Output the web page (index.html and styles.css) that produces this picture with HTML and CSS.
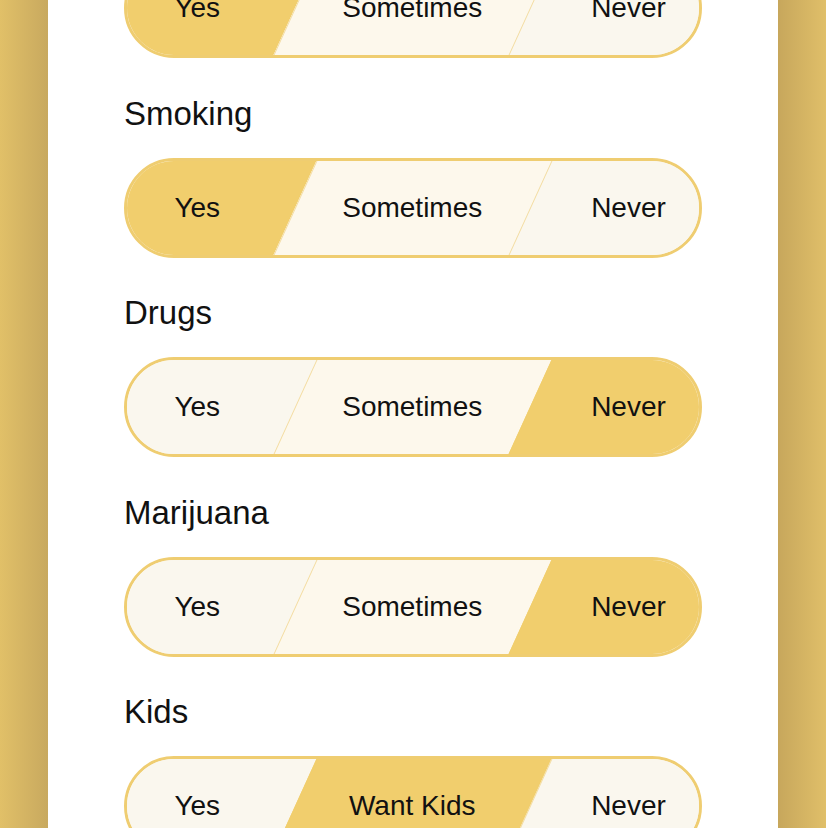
FILE: index.html
```html
<!DOCTYPE html>
<html lang="en">
<head>
<meta charset="utf-8">
<title>Preferences</title>
<link rel="stylesheet" href="styles.css">
</head>
<body>
<div class="page">
  <aside class="band band-left"></aside>
  <main class="card">
    <div class="list">
      <section class="group">
        <h2 class="label">Drinking</h2>
        <div class="seg">
          <div class="opt opt-first sel"><span>Yes</span></div>
          <div class="opt opt-mid"><span>Sometimes</span></div>
          <div class="opt opt-last"><span>Never</span></div>
        </div>
      </section>
      <section class="group">
        <h2 class="label">Smoking</h2>
        <div class="seg">
          <div class="opt opt-first sel"><span>Yes</span></div>
          <div class="opt opt-mid"><span>Sometimes</span></div>
          <div class="opt opt-last"><span>Never</span></div>
        </div>
      </section>
      <section class="group">
        <h2 class="label">Drugs</h2>
        <div class="seg">
          <div class="opt opt-first"><span>Yes</span></div>
          <div class="opt opt-mid"><span>Sometimes</span></div>
          <div class="opt opt-last sel"><span>Never</span></div>
        </div>
      </section>
      <section class="group">
        <h2 class="label">Marijuana</h2>
        <div class="seg">
          <div class="opt opt-first"><span>Yes</span></div>
          <div class="opt opt-mid"><span>Sometimes</span></div>
          <div class="opt opt-last sel"><span>Never</span></div>
        </div>
      </section>
      <section class="group">
        <h2 class="label">Kids</h2>
        <div class="seg">
          <div class="opt opt-first"><span>Yes</span></div>
          <div class="opt opt-mid sel"><span>Want Kids</span></div>
          <div class="opt opt-last"><span>Never</span></div>
        </div>
      </section>
    </div>
  </main>
  <aside class="band band-right"></aside>
</div>
</body>
</html>
```
FILE: styles.css
```css
* { box-sizing: border-box; }
html, body { margin: 0; padding: 0; }
body {
  width: 826px;
  height: 828px;
  overflow: hidden;
  font-family: "Liberation Sans", Arial, sans-serif;
  color: #111;
  background: #fff;
}
.page {
  display: flex;
  height: 828px;
}
.band { width: 48px; flex: none; }
.band-left { background: linear-gradient(to right, #e1c068, #c8a95f); }
.band-right { background: linear-gradient(to right, #c7a75c, #e0bf69); }
.card {
  flex: 1;
  background: #fff;
  overflow: hidden;
  padding: 0 76px;
}
.list {
  margin-top: -106px;
  display: flex;
  flex-direction: column;
}
.group {
  display: flex;
  flex-direction: column;
  gap: 24px;
  padding-bottom: 35.5px;
}
.label {
  margin: 0;
  font-size: 33px;
  font-weight: normal;
  line-height: 40px;
  height: 40px;
}
.seg {
  display: flex;
  height: 100px;
  border: 3px solid #efcd71;
  border-radius: 50px;
  overflow: hidden;
  position: relative;
  background: #faf7ee;
}
.opt {
  position: relative;
  display: flex;
  align-items: center;
  justify-content: center;
  font-size: 28px;
}
.opt span { position: relative; z-index: 1; }
.opt::before {
  content: "";
  position: absolute;
  top: 0;
  bottom: 0;
  left: 0;
  right: 0;
  transform: skewX(-24.5deg);
  background: #faf7ee;
}
.opt-first { width: 167.5px; padding-right: 27px; }
.opt-first::before { left: -80px; }
.opt-mid { width: 235.5px; }
.opt-mid::before { background: #fdf8ec; border-left: 1.5px solid #f3dca0; }
.opt-last { width: 169px; padding-left: 28px; }
.opt-last::before { right: -80px; border-left: 1.5px solid #f3dca0; }
.opt.sel::before { background: #f1ce6d; border-left-color: #f1ce6d; }
.opt-mid.sel::before { border-right: 1.5px solid #f1ce6d; }
```
